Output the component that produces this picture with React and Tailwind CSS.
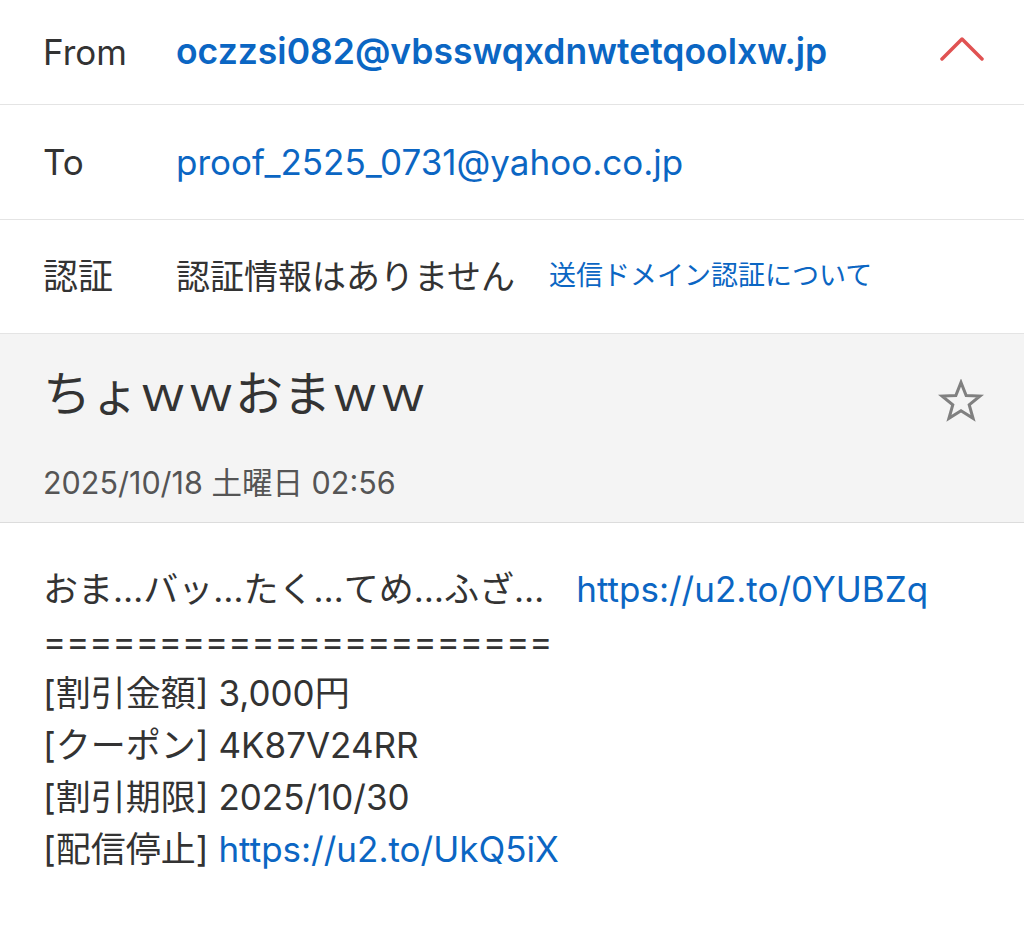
const font = { fontFamily: '"Inter", "Noto Sans CJK JP", sans-serif' };

function Row({ label, children, right, h }) {
  return (
    <div className={`flex items-center border-b border-[#e4e4e4] pl-[43px] pr-[40px] ${h}`}>
      <div className="w-[133px] shrink-0 text-[35px] text-[#333]">{label}</div>
      <div className="flex flex-1 items-center">{children}</div>
      {right}
    </div>
  );
}

export default function App() {
  return (
    <div className="min-h-[949px] bg-white" style={font}>
      <Row
        label="From"
        h="h-[105px]"
        right={
          <svg width="44" height="26" viewBox="0 0 44 26" className="mb-[8px] shrink-0">
            <path d="M2 24 L22 4 L42 24" fill="none" stroke="#e05252" strokeWidth="3.5" strokeLinecap="round" strokeLinejoin="round" />
          </svg>
        }
      >
        <span className="text-[35.5px] font-semibold text-[#0b66c3]">oczzsi082@vbsswqxdnwtetqoolxw.jp</span>
      </Row>
      <Row label="To" h="h-[115px]">
        <span className="text-[35px] text-[#0b66c3]">proof_2525_0731@yahoo.co.jp</span>
      </Row>
      <Row label="認証" h="h-[114px]">
        <span className="text-[34px] text-[#333]">認証情報はありません</span>
        <span className="ml-[34px] text-[27px] text-[#0b66c3]">送信ドメイン認証について</span>
      </Row>

      <div className="h-[189px] border-b border-[#dcdcdc] bg-[#f4f4f4] pl-[43px] pr-[40px]">
        <div className="flex h-[120px] items-center justify-between">
          <div className="text-[48px] text-[#333]">ちょｗｗおまｗｗ</div>
          <svg width="46" height="44" viewBox="0 0 24 23" className="mt-[14px] shrink-0">
            <path
              d="M12 1.8 L14.7 8.6 L22 8.9 L16.3 13.5 L18.3 20.6 L12 16.6 L5.7 20.6 L7.7 13.5 L2 8.9 L9.3 8.6 Z"
              fill="none"
              stroke="#808080"
              strokeWidth="1.6"
              strokeLinejoin="miter"
            />
          </svg>
        </div>
        <div className="mt-[9px] text-[30.5px] leading-[40px] text-[#555]">2025/10/18 土曜日 02:56</div>
      </div>

      <div className="pl-[43px] pt-[40px] text-[35px] leading-[52px] text-[#333]">
        <div>
          おま…バッ…たく…てめ…ふざ…<span className="ml-[32px] text-[#0b66c3]">https://u2.to/0YUBZq</span>
        </div>
        <div>======================</div>
        <div>[割引金額] 3,000円</div>
        <div>[クーポン] 4K87V24RR</div>
        <div>[割引期限] 2025/10/30</div>
        <div>
          [配信停止] <span className="text-[#0b66c3]">https://u2.to/UkQ5iX</span>
        </div>
      </div>
    </div>
  );
}
